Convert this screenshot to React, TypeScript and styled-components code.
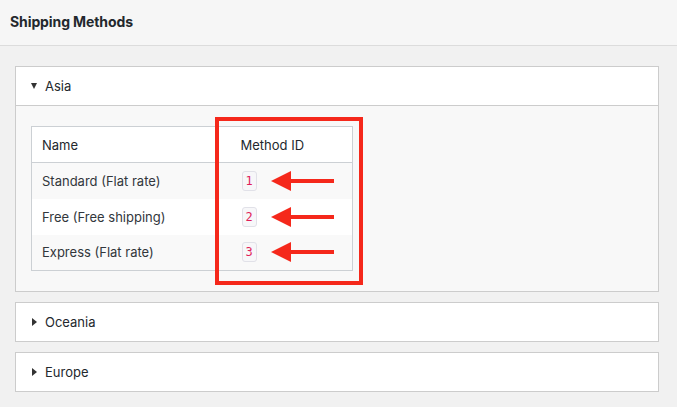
import React from "react";
import styled, { createGlobalStyle } from "styled-components";

const Global = createGlobalStyle`
  html, body { margin: 0; padding: 0; }
  body {
    background: #f1f1f1;
    font-family: Inter, "Liberation Sans", Arial, sans-serif;
    font-size: 13px;
    color: #23282d;
    width: 677px;
    height: 407px;
    overflow: hidden;
  }
`;

const Page = styled.div`
  display: flex;
  flex-direction: column;
  min-height: 407px;
`;

const TopBar = styled.header`
  background: #f6f6f6;
  border-bottom: 1px solid #dcdcdc;
  display: flex;
  align-items: center;
  padding-left: 10px;
  box-sizing: border-box;
  height: 46px;
`;

const Title = styled.h1`
  margin: 0;
  font-size: 14px;
  font-weight: 700;
  letter-spacing: -0.1px;
  color: #23282d;
  padding-bottom: 3px;
`;

const Content = styled.main`
  padding: 20px 18px 0 15px;
  display: flex;
  flex-direction: column;
  gap: 10px;
`;

const Panel = styled.section`
  background: #fff;
  border: 1px solid #cccccc;
`;

const PanelHeader = styled.div<{ $open?: boolean }>`
  height: 38px;
  display: flex;
  align-items: center;
  padding-left: 15px;
  gap: 8px;
  background: #fff;
  border-bottom: ${(p) => (p.$open ? "1px solid #cccccc" : "none")};
  color: #23282d;
  font-size: 13px;
`;

const Caret = styled.span<{ $open?: boolean }>`
  width: 0;
  height: 0;
  ${(p) =>
    p.$open
      ? `border-left: 3.5px solid transparent;
         border-right: 3.5px solid transparent;
         border-top: 6px solid #333;`
      : `margin-left: 1px;
         margin-right: 0;
         border-top: 4px solid transparent;
         border-bottom: 4px solid transparent;
         border-left: 5px solid #333;`}
`;

const PanelBody = styled.div`
  position: relative;
  background: #f8f8f8;
  padding: 20px 15px 20px 15px;
`;

const Table = styled.table`
  width: 322px;
  border-collapse: collapse;
  border: 1px solid #ccd0d4;
  background: #fff;
  font-size: 13px;
`;

const HeadRow = styled.tr`
  height: 36px;
`;

const HeadCell = styled.th<{ $w?: number }>`
  padding: 0 10px;
  text-align: left;
  font-weight: 400;
  color: #23282d;
  border-bottom: 1px solid #ccd0d4;
  ${(p) => (p.$w ? `width: ${p.$w}px;` : "")}
  box-sizing: border-box;
`;

const Row = styled.tr<{ $alt?: boolean }>`
  height: 36px;
  background: ${(p) => (p.$alt ? "#f9f9f9" : "#fff")};
`;

const Cell = styled.td`
  padding: 0 10px;
  color: #32373c;
  box-sizing: border-box;
`;

const IdWrap = styled.div`
  display: flex;
  align-items: center;
  gap: 14px;
`;

const Code = styled.code`
  display: inline-flex;
  align-items: center;
  justify-content: center;
  height: 20px;
  min-width: 15px;
  box-sizing: border-box;
  padding: 0 2px;
  font-family: "DejaVu Sans Mono", "Liberation Mono", monospace;
  font-size: 12px;
  color: #e01e5a;
  background: #f7f7f9;
  border: 1px solid #e1e1e8;
  border-radius: 3px;
  margin-left: 1px;
`;

const Highlight = styled.div`
  position: absolute;
  left: 199px;
  top: 11px;
  width: 148px;
  height: 168px;
  border: 4px solid #f5281b;
  box-sizing: border-box;
  pointer-events: none;
`;

const Arrow = () => (
  <svg width="63" height="20" viewBox="0 0 63 20" aria-hidden>
    <polygon points="0,10 20,0 20,20" fill="#f5281b" />
    <rect x="19" y="8" width="44" height="4" fill="#f5281b" />
  </svg>
);

const methods = [
  { name: "Standard (Flat rate)", id: "1" },
  { name: "Free (Free shipping)", id: "2" },
  { name: "Express (Flat rate)", id: "3" },
];

export default function App() {
  return (
    <>
      <Global />
      <Page>
        <TopBar>
          <Title>Shipping Methods</Title>
        </TopBar>
        <Content>
          <Panel>
            <PanelHeader $open>
              <Caret $open />
              Asia
            </PanelHeader>
            <PanelBody>
              <Table>
                <thead>
                  <HeadRow>
                    <HeadCell $w={199}>Name</HeadCell>
                    <HeadCell>Method ID</HeadCell>
                  </HeadRow>
                </thead>
                <tbody>
                  {methods.map((m, i) => (
                    <Row key={m.id} $alt={i % 2 === 0}>
                      <Cell>{m.name}</Cell>
                      <Cell>
                        <IdWrap>
                          <Code>{m.id}</Code>
                          <Arrow />
                        </IdWrap>
                      </Cell>
                    </Row>
                  ))}
                </tbody>
              </Table>
              <Highlight />
            </PanelBody>
          </Panel>
          <Panel>
            <PanelHeader>
              <Caret />
              Oceania
            </PanelHeader>
          </Panel>
          <Panel>
            <PanelHeader>
              <Caret />
              Europe
            </PanelHeader>
          </Panel>
        </Content>
      </Page>
    </>
  );
}
